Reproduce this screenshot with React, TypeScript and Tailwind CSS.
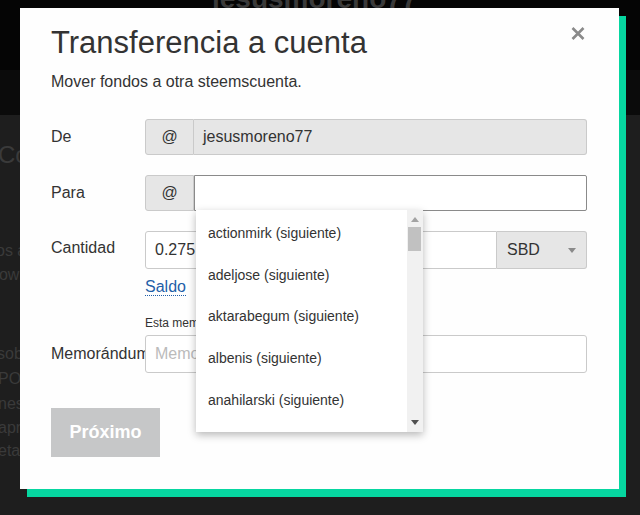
import React from "react";

const font = { fontFamily: '"Liberation Sans", Arial, sans-serif' };

function Background() {
  return (
    <div className="absolute inset-0 flex flex-col">
      <div className="h-[70px] bg-[#050505] relative overflow-hidden">
        <div className="absolute left-[212px] top-[-17px] text-[28px] leading-[32px] font-bold text-[#3a3a3a]">
          jesusmoreno77
        </div>
      </div>
      <div className="h-[45px] bg-[#0b0b0b]" />
      <div className="flex-1 bg-[#1e1e1e] text-[#3a3a3a]">
        <div className="mt-[26px] ml-[-2px] text-[24px] leading-[28px]">Co</div>
        <div className="mt-[70px] ml-[-4px] text-[16px] leading-[24px]">os a</div>
        <div className="ml-[-10px] text-[16px] leading-[24px]">pow</div>
        <div className="mt-[54px] ml-[-3px] text-[16px] leading-[25px]">sob</div>
        <div className="ml-[-2px] text-[16px] leading-[25px]">PO</div>
        <div className="ml-[-2px] text-[16px] leading-[25px]">nes</div>
        <div className="ml-[-2px] text-[16px] leading-[23px]">apr</div>
        <div className="ml-[-2px] text-[16px] leading-[23px]">eta</div>
      </div>
    </div>
  );
}

const users = ["actionmirk", "adeljose", "aktarabegum", "albenis", "anahilarski"];

function Dropdown() {
  return (
    <div className="absolute left-[1px] top-full w-[227px] h-[222px] bg-white shadow-[0_3px_8px_rgba(0,0,0,0.28)] overflow-hidden z-10">
      <div className="pt-[2px] pr-[16px]">
        {users.map((u) => (
          <div key={u} className="h-[41.7px] flex items-center pl-[12px] text-[14px] leading-[20px] text-[#333]">
            {u} (siguiente)
          </div>
        ))}
      </div>
      <div className="absolute right-0 top-0 bottom-0 w-[16px] bg-[#f1f1f1]">
        <svg className="absolute left-[4px] top-[7px]" width="8" height="5" viewBox="0 0 8 5">
          <polygon points="0,5 4,0 8,5" fill="#a3a3a3" />
        </svg>
        <div className="absolute left-[1px] top-[17px] w-[13px] h-[24px] bg-[#c1c1c1]" />
        <svg className="absolute left-[4px] bottom-[7px]" width="8" height="5" viewBox="0 0 8 5">
          <polygon points="0,0 8,0 4,5" fill="#505050" />
        </svg>
      </div>
    </div>
  );
}

export default function App() {
  return (
    <div className="relative w-[640px] h-[515px] overflow-hidden" style={font}>
      <Background />
      <div className="absolute left-[20px] top-[8px] w-[599px] h-[481px] bg-[#fefefe] shadow-[7px_8px_0_0_#06d6a0] pl-[31px] pr-[32px] pt-[17px] text-[#333]">
        <svg className="absolute right-[34px] top-[19px]" width="14" height="13" viewBox="0 0 14 13">
          <path d="M1.5 1 L12.5 12 M12.5 1 L1.5 12" stroke="#8a8a8a" strokeWidth="2.6" />
        </svg>
        <h2 className="text-[31px] leading-[35px] text-[#333] font-normal">Transferencia a cuenta</h2>
        <p className="mt-[12px] text-[16px] leading-[20px] text-[#333]">Mover fondos a otra steemscuenta.</p>

        <div className="mt-[27px] flex items-center h-[36px]">
          <div className="w-[94px] shrink-0 text-[16px] leading-[20px]">De</div>
          <div className="flex flex-1 h-full">
            <div className="w-[49px] flex items-center justify-center bg-[#e6e6e6] border border-[#cacaca] rounded-l-[3px] text-[16px] text-[#333]">@</div>
            <div className="flex-1 flex items-center pl-[9px] bg-[#e6e6e6] border border-l-0 border-[#cacaca] rounded-r-[3px] text-[16px] text-[#333]">jesusmoreno77</div>
          </div>
        </div>

        <div className="mt-[20px] flex items-center h-[36px]">
          <div className="w-[94px] shrink-0 text-[16px] leading-[20px]">Para</div>
          <div className="flex flex-1 h-full">
            <div className="w-[49px] flex items-center justify-center bg-[#e6e6e6] border border-[#cacaca] rounded-l-[3px] text-[16px] text-[#333]">@</div>
            <div className="relative flex-1 bg-white border border-[#8a8a8a] rounded-r-[2px]">
              <Dropdown />
            </div>
          </div>
        </div>

        <div className="mt-[20px] flex items-start h-[38px]">
          <div className="w-[94px] shrink-0 pt-[7px] text-[16px] leading-[20px]">Cantidad</div>
          <div className="flex flex-1 h-full">
            <div className="flex-1 flex items-center pl-[9px] bg-white border border-[#cacaca] rounded-l-[3px] text-[16px] text-[#333]">0.275</div>
            <div className="w-[90px] relative flex items-center pl-[10px] bg-[#e6e6e6] border border-l-0 border-[#cacaca] rounded-r-[3px] text-[16px] text-[#333]">
              SBD
              <svg className="absolute right-[10px] top-[16px]" width="8" height="5" viewBox="0 0 8 5">
                <polygon points="0,0 8,0 4,5" fill="#8a8a8a" />
              </svg>
            </div>
          </div>
        </div>

        <div className="ml-[94px] mt-[8px] text-[16px] leading-[20px]">
          <span className="text-[#1f5ea8] border-b border-dotted border-[#1f5ea8]">Saldo</span>
        </div>
        <div className="ml-[94px] mt-[18px] text-[12px] leading-[16px] text-[#333]">Esta memo es pública</div>

        <div className="mt-[4px] flex items-center h-[38px]">
          <div className="w-[94px] shrink-0 text-[16px] leading-[20px] whitespace-nowrap overflow-visible">Memorándum</div>
          <div className="flex-1 h-full flex items-center pl-[9px] bg-white border border-[#cacaca] rounded-[3px] text-[16px] text-[#bbbbbb]">
            Memorándum
          </div>
        </div>

        <div className="mt-[35px] w-[109px] h-[49px] flex items-center justify-center bg-[#c6c7c8] text-white font-bold text-[18px]">
          Próximo
        </div>
      </div>
    </div>
  );
}
